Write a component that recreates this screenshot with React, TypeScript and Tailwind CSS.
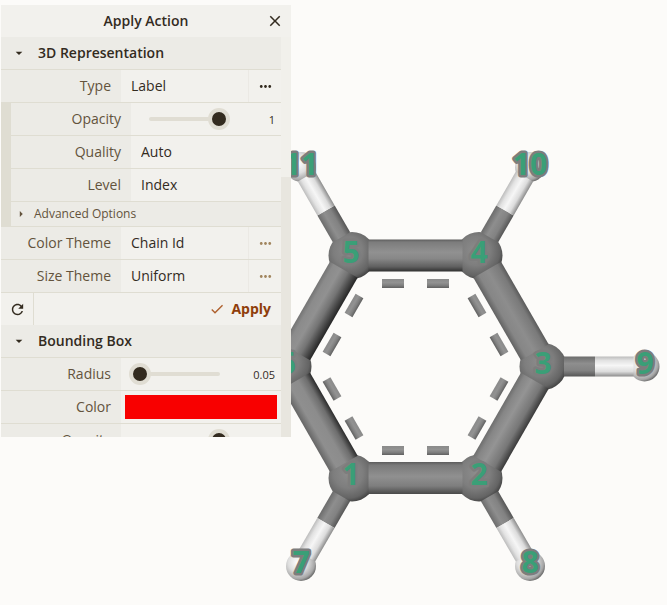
import type { ReactNode } from "react";

/* ---------- icons ---------- */

function Icon({ d, className }: { d: string; className: string }) {
  return (
    <svg viewBox="0 0 24 24" className={className} fill="currentColor" aria-hidden="true">
      <path d={d} />
    </svg>
  );
}

const CLOSE = "M19 6.41 17.59 5 12 10.59 6.41 5 5 6.41 10.59 12 5 17.59 6.41 19 12 13.41 17.59 19 19 17.59 13.41 12z";
const MORE =
  "M6 10c-1.1 0-2 .9-2 2s.9 2 2 2 2-.9 2-2-.9-2-2-2m12 0c-1.1 0-2 .9-2 2s.9 2 2 2 2-.9 2-2-.9-2-2-2m-6 0c-1.1 0-2 .9-2 2s.9 2 2 2 2-.9 2-2-.9-2-2-2";
const REFRESH =
  "M17.65 6.35C16.2 4.9 14.21 4 12 4c-4.42 0-7.99 3.58-7.99 8s3.57 8 7.99 8c3.73 0 6.84-2.55 7.73-6h-2.08c-.82 2.33-3.04 4-5.65 4-3.31 0-6-2.69-6-6s2.69-6 6-6c1.66 0 3.14.69 4.22 1.78L13 11h7V4z";
const CHECK = "M9 16.17 4.83 12l-1.42 1.41L9 19 21 7l-1.41-1.41z";
const DOWN = "m7 10 5 5 5-5z";
const RIGHT = "m10 17 5-5-5-5z";

/* ---------- control rows ---------- */

function Section({ title }: { title: string }) {
  return (
    <button
      type="button"
      aria-expanded="true"
      className="flex h-8 w-full items-center gap-[11px] bg-[#ecebe6] pl-2.5 text-left font-semibold"
    >
      <Icon d={DOWN} className="size-4" />
      {title}
    </button>
  );
}

function Row({ id, label, children }: { id: string; label: string; children: ReactNode }) {
  return (
    <div className="flex h-8 w-full">
      <label
        htmlFor={id}
        className="flex w-[120px] shrink-0 items-center justify-end bg-[#ecebe6] pr-2.5 text-[#63533c]"
      >
        {label}
      </label>
      <div className="flex min-w-0 flex-1 bg-[#f2f1ed]">{children}</div>
    </div>
  );
}

function Choice({ id, options }: { id: string; options: string[] }) {
  return (
    <select id={id} className="min-w-0 flex-1 appearance-none bg-transparent px-2.5 outline-none">
      {options.map((o) => (
        <option key={o}>{o}</option>
      ))}
    </select>
  );
}

function More({ label, className }: { label: string; className: string }) {
  return (
    <button
      type="button"
      aria-label={label}
      className={`flex w-[33px] items-center justify-center border-l border-[#ebe9e4] ${className}`}
    >
      <Icon d={MORE} className="size-[17px]" />
    </button>
  );
}

function Slider({ id, label, value }: { id: string; label: string; value: number }) {
  return (
    <>
      <div className="relative ml-2 flex min-w-0 flex-1 items-center before:absolute before:inset-x-2.5 before:h-1 before:rounded-full before:bg-[#e0ddd3]">
        <input
          id={id}
          type="range"
          min={0}
          max={1}
          step={0.01}
          defaultValue={value === 0.05 ? 0 : value}
          className="relative h-[22px] w-full appearance-none bg-transparent [&::-webkit-slider-thumb]:size-[22px] [&::-webkit-slider-thumb]:appearance-none [&::-webkit-slider-thumb]:rounded-full [&::-webkit-slider-thumb]:border-4 [&::-webkit-slider-thumb]:border-[#e0ddd3] [&::-webkit-slider-thumb]:bg-[#332b1f]"
        />
      </div>
      <input
        type="text"
        aria-label={label}
        defaultValue={value}
        className="w-[51px] bg-transparent pt-px pr-1.5 text-right text-[11px] outline-none"
      />
    </>
  );
}

function ActionPanel() {
  return (
    <section className="absolute top-[5px] left-px flex h-[432px] w-[290px] flex-col overflow-hidden bg-[#f2f1ed] text-[#332b1f]">
      <header className="relative flex h-8 shrink-0 items-center justify-center font-semibold">
        <h1>Apply Action</h1>
        <button type="button" aria-label="Close" className="absolute right-0 flex size-8 items-center justify-center">
          <Icon d={CLOSE} className="size-[18px]" />
        </button>
      </header>
      <div className="flex min-h-0 flex-1">
        <div className="min-w-0 flex-1 overflow-hidden">
          <div className="flex flex-col gap-px bg-[#dfddd2]">
            <Section title="3D Representation" />
            <Row id="type" label="Type">
              <Choice id="type" options={["Label", "Ball & Stick", "Cartoon"]} />
              <More label="Type options" className="" />
            </Row>
            <div className="flex flex-col gap-px pl-2.5">
              <Row id="opacity" label="Opacity">
                <Slider id="opacity" label="Opacity value" value={1} />
              </Row>
              <Row id="quality" label="Quality">
                <Choice id="quality" options={["Auto", "High", "Low"]} />
              </Row>
              <Row id="level" label="Level">
                <Choice id="level" options={["Index", "Element", "Residue"]} />
              </Row>
              <button
                type="button"
                aria-expanded="false"
                className="flex h-6 items-center gap-1.5 bg-[#ecebe6] pl-[3px] text-xs text-[#63533c]"
              >
                <Icon d={RIGHT} className="size-3.5" />
                Advanced Options
              </button>
            </div>
            <Row id="color-theme" label="Color Theme">
              <Choice id="color-theme" options={["Chain Id", "Element Symbol"]} />
              <More label="Color theme options" className="text-[#a1855e]" />
            </Row>
            <Row id="size-theme" label="Size Theme">
              <Choice id="size-theme" options={["Uniform", "Physical"]} />
              <More label="Size theme options" className="text-[#a1855e]" />
            </Row>
            <div className="flex h-8 gap-px">
              <button type="button" aria-label="Reset" className="flex w-8 items-center justify-center bg-[#f2f1ed]">
                <Icon d={REFRESH} className="size-[17px]" />
              </button>
              <button
                type="button"
                className="flex flex-1 items-center justify-end gap-1.5 bg-[#f2f1ed] pr-2.5 font-bold text-[#8f3e0a]"
              >
                <Icon d={CHECK} className="size-4 text-[#ae5f2c]" />
                Apply
              </button>
            </div>
          </div>
          <div className="flex flex-col gap-px bg-[#dfddd2]">
            <Section title="Bounding Box" />
            <Row id="radius" label="Radius">
              <Slider id="radius" label="Radius value" value={0.05} />
            </Row>
            <Row id="color" label="Color">
              <button id="color" type="button" className="m-1 flex-1 bg-[#f80000]" />
            </Row>
            <Row id="box-opacity" label="Opacity">
              <Slider id="box-opacity" label="Box opacity value" value={1} />
            </Row>
          </div>
        </div>
        <div className="w-2.5 bg-[#f1f0eb] pt-[140px]">
          <div className="h-full bg-[#e8e6df]" />
        </div>
      </div>
    </section>
  );
}

/* ---------- molecule ---------- */

type Stop = [number, string];

const SHADES: Record<string, Stop[]> = {
  top: [[0, "#5c5c5c"], [0.08, "#7c7c7c"], [0.4, "#919191"], [0.6, "#878787"], [0.85, "#606060"], [1, "#303030"]],
  bottom: [[0, "#5c5c5c"], [0.1, "#7a7a7a"], [0.45, "#909090"], [0.75, "#7e7e7e"], [1, "#4a4a4a"]],
  leftUp: [[0, "#747474"], [0.15, "#8b8b8b"], [0.4, "#919191"], [0.65, "#747474"], [1, "#262626"]],
  leftDown: [[0, "#2c2c2c"], [0.2, "#6e6e6e"], [0.45, "#8c8c8c"], [0.75, "#8f8f8f"], [1, "#666666"]],
  rightUp: [[0, "#5a5a5a"], [0.15, "#7a7a7a"], [0.5, "#8d8d8d"], [0.8, "#868686"], [1, "#626262"]],
  rightDown: [[0, "#6e6e6e"], [0.15, "#868686"], [0.4, "#949494"], [0.75, "#777777"], [1, "#3a3a3a"]],
  arm: [[0, "#6c6c6c"], [0.35, "#8e8e8e"], [0.7, "#828282"], [1, "#565656"]],
  armWhite: [[0, "#bcbcbc"], [0.2, "#e2e2e2"], [0.45, "#f6f6f6"], [0.75, "#dcdcdc"], [1, "#8c8c8c"]],
  dash: [[0, "#8a8a8a"], [0.4, "#929292"], [0.7, "#808080"], [1, "#606060"]],
};

const CARBONS: [number, number][] = [[352, 478], [479, 478], [543, 366.5], [479, 255.5], [352, 255.5], [288, 366.5]];
const HYDROGENS: [number, number][] = [[301, 566], [530, 566], [644.5, 366.5], [530, 167], [301, 167]];

const RING = [
  { a: 4, b: 3, shade: "top" },
  { a: 0, b: 1, shade: "bottom" },
  { a: 5, b: 4, shade: "leftUp" },
  { a: 5, b: 0, shade: "leftDown" },
  { a: 3, b: 2, shade: "rightUp" },
  { a: 1, b: 2, shade: "rightDown" },
];

/* atom index and the side of the bond that faces the light */
const ARMS: [number, number][] = [[0, -1], [1, -1], [2, 1], [3, 1], [4, 1]];

const DASHES: [number, number, number][] = [
  [393, 283.5, 0], [438, 283.5, 0], [393, 450.5, 0], [438, 450.5, 0],
  [354, 305.5, -60], [332, 344.5, -60], [332, 389, 60], [354, 428, 60],
  [477, 305.5, 60], [499, 344.5, 60], [499, 389, -60], [477, 428, -60],
];

const LABELS: [string, number, number][] = [
  ["1", 351, 485], ["2", 479, 485], ["3", 543, 374], ["4", 479, 263], ["5", 351, 263], ["6", 287, 374],
  ["7", 301, 573], ["8", 530, 573], ["9", 645, 374], ["10", 530, 175], ["11", 301, 175],
];

function place(p: [number, number], q: [number, number]) {
  const dx = q[0] - p[0];
  const dy = q[1] - p[1];
  const angle = (Math.atan2(dy, dx) * 180) / Math.PI;
  return { length: Math.hypot(dx, dy), transform: `translate(${p[0]} ${p[1]}) rotate(${angle})` };
}

function Molecule() {
  return (
    <svg
      viewBox="0 0 667 605"
      preserveAspectRatio="xMidYMid slice"
      className="block h-full w-full"
      role="img"
      aria-label="Benzene molecule"
    >
      <defs>
        {Object.entries(SHADES).map(([name, stops]) => (
          <linearGradient key={name} id={name} x1="0" y1="0" x2="0" y2="1">
            {stops.map(([offset, color]) => (
              <stop key={offset} offset={offset} stopColor={color} />
            ))}
          </linearGradient>
        ))}
        <radialGradient id="carbon" cx="0.42" cy="0.4" r="0.62">
          <stop offset="0" stopColor="#8c8c8c" />
          <stop offset="0.5" stopColor="#7e7e7e" />
          <stop offset="0.85" stopColor="#646464" />
          <stop offset="1" stopColor="#444444" />
        </radialGradient>
        <radialGradient id="hydrogen" cx="0.4" cy="0.38" r="0.65">
          <stop offset="0" stopColor="#ffffff" />
          <stop offset="0.5" stopColor="#dedede" />
          <stop offset="0.85" stopColor="#a6a6a6" />
          <stop offset="1" stopColor="#666666" />
        </radialGradient>
      </defs>
      {HYDROGENS.map(([x, y]) => (
        <circle key={`${x}-${y}`} cx={x} cy={y} r="15" fill="url(#hydrogen)" />
      ))}
      {CARBONS.map(([x, y]) => (
        <circle key={`${x}-${y}`} cx={x} cy={y} r="23.5" fill="url(#carbon)" />
      ))}
      {ARMS.map(([i, side]) => {
        const { length, transform } = place(CARBONS[i], HYDROGENS[i]);
        return (
          <g key={i} transform={`${transform} scale(1 ${side})`}>
            <rect x={21} y={-10} width={31} height={20} fill="url(#arm)" />
            <rect x={52} y={-10} width={length - 63} height={20} fill="url(#armWhite)" />
          </g>
        );
      })}
      {RING.map(({ a, b, shade }) => {
        const { length, transform } = place(CARBONS[a], CARBONS[b]);
        return (
          <g key={shade} transform={transform}>
            <rect x={16.5} y={-16} width={length - 33} height={32} fill={`url(#${shade})`} />
          </g>
        );
      })}
      {DASHES.map(([x, y, r]) => (
        <g key={`${x}-${y}`} transform={`translate(${x} ${y}) rotate(${r})`}>
          <rect x={-11} y={-4.5} width={22} height={9} fill="url(#dash)" />
        </g>
      ))}
      <g
        fill="#3a9f77"
        stroke="#7d7d7d"
        strokeWidth="5"
        strokeLinejoin="round"
        paintOrder="stroke"
        textAnchor="middle"
        fontSize="30"
        fontWeight="700"
      >
        {LABELS.map(([text, x, y]) => (
          <text key={text} x={x} y={y}>
            {text}
          </text>
        ))}
      </g>
    </svg>
  );
}

export default function App() {
  return (
    <main className="relative h-screen w-full overflow-hidden bg-[#fcfbf9] font-['Open_Sans','Noto_Sans',sans-serif] text-sm">
      <Molecule />
      <ActionPanel />
    </main>
  );
}
